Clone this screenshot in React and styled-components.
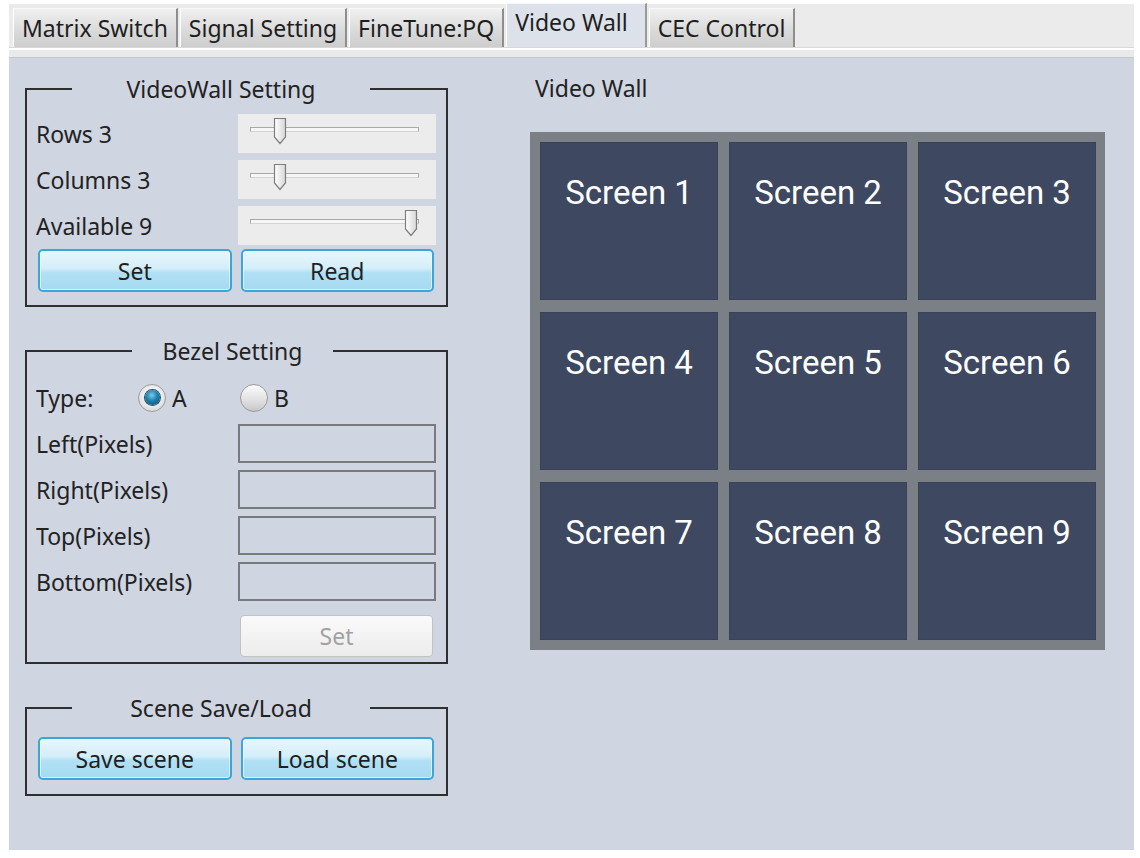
import styled, { createGlobalStyle } from 'styled-components'

const GlobalStyle = createGlobalStyle`
  html, body {
    margin: 0;
    background: #ffffff;
  }
  body {
    font-family: "Noto Sans", "Liberation Sans", sans-serif;
    color: #222;
  }
`

const tabs = ['Matrix Switch', 'Signal Setting', 'FineTune:PQ', 'Video Wall', 'CEC Control']

const sliders = [
  { label: 'Rows 3', value: 3, max: 15 },
  { label: 'Columns 3', value: 3, max: 15 },
  { label: 'Available 9', value: 9, max: 9 },
]

const bezels = ['Left(Pixels)', 'Right(Pixels)', 'Top(Pixels)', 'Bottom(Pixels)']

const screens = [1, 2, 3, 4, 5, 6, 7, 8, 9]

const Slider = ({ value, max }) => {
  const pos = (value - 1) / (max - 1)
  return (
    <SliderBox>
      <Track>
        <Thumb style={{ left: `calc(${pos * 100}% - ${pos * 14}px)` }}>
          <svg width="14" height="28" viewBox="0 0 14 28">
            <defs>
              <linearGradient id="thumbFill" x1="0" y1="0" x2="1" y2="0">
                <stop offset="0" stopColor="#ffffff" />
                <stop offset="1" stopColor="#d6d6d6" />
              </linearGradient>
            </defs>
            <path d="M1.5 1.5 H12.5 V20 L7 26.5 L1.5 20 Z" fill="url(#thumbFill)" stroke="#7d7d7d" strokeWidth="1.2" />
          </svg>
        </Thumb>
      </Track>
    </SliderBox>
  )
}

const Radio = ({ checked, label }) => (
  <RadioOption>
    <RadioCircle $checked={checked}>{checked && <RadioDot />}</RadioCircle>
    <span>{label}</span>
  </RadioOption>
)

const App = () => {
  return (
    <>
      <GlobalStyle />
      <Window>
        <TabBar>
          {tabs.map((t) => (
            <Tab key={t} $active={t === 'Video Wall'}>
              {t}
            </Tab>
          ))}
        </TabBar>
        <PaneEdge />
        <Panel>
          <LeftColumn>
            <Group $pb={13}>
              <Legend $left={36} $width={298}>VideoWall Setting</Legend>
              <Rows $top={11}>
                {sliders.map((s) => (
                  <Row key={s.label}>
                    <Label>{s.label}</Label>
                    <Slider value={s.value} max={s.max} />
                  </Row>
                ))}
              </Rows>
              <ButtonRow $top={4}>
                <BlueButton>Set</BlueButton>
                <BlueButton>Read</BlueButton>
              </ButtonRow>
            </Group>

            <Group $pb={15}>
              <Legend $left={96} $width={201}>Bezel Setting</Legend>
              <Rows $top={13}>
                <Row>
                  <TypeLine>
                    <Label>Type:</Label>
                    <Radio checked label="A" />
                    <Radio label="B" />
                  </TypeLine>
                </Row>
                {bezels.map((b) => (
                  <Row key={b}>
                    <Label>{b}</Label>
                    <Field />
                  </Row>
                ))}
                <Row>
                  <span />
                  <DisabledButton disabled>Set</DisabledButton>
                </Row>
              </Rows>
            </Group>

            <Group $pb={14}>
              <Legend $left={36} $width={298}>Scene Save/Load</Legend>
              <ButtonRow $top={15}>
                <BlueButton>Save scene</BlueButton>
                <BlueButton>Load scene</BlueButton>
              </ButtonRow>
            </Group>
          </LeftColumn>

          <RightColumn>
            <WallTitle>Video Wall</WallTitle>
            <Wall>
              {screens.map((n) => (
                <Screen key={n}>Screen {n}</Screen>
              ))}
            </Wall>
          </RightColumn>
        </Panel>
      </Window>
    </>
  )
}

export default App

const Window = styled.div`
  margin: 4px 0 0 9px;
  width: 1125px;
`

const TabBar = styled.div`
  display: flex;
  align-items: flex-end;
  height: 44px;
  padding-left: 4px;
  background: #ebebeb;
  border-bottom: 1px solid #d9d9d9;
  box-sizing: border-box;
`

const Tab = styled.div`
  box-sizing: border-box;
  height: ${(p) => (p.$active ? 44 : 39)}px;
  padding: 0 ${(p) => (p.$active ? 17 : 8)}px ${(p) => (p.$active ? 8 : 0)}px 8px;
  margin-right: 2px;
  display: flex;
  align-items: center;
  font-size: 23px;
  color: #1e1e1e;
  white-space: nowrap;
  background: ${(p) =>
    p.$active ? '#dde2ea' : 'linear-gradient(#f0f0f0, #d9d9d9 60%, #cdcdcd)'};
  border-top: 1px solid #f7f7f7;
  border-left: 1px solid #ffffff;
  border-right: 2px solid ${(p) => (p.$active ? '#9a9a9a' : '#8e8e8e')};
`

const PaneEdge = styled.div`
  height: 7px;
  background: #e8e9ea;
  border-top: 2px solid #ffffff;
  border-bottom: 1px solid #c3c8cc;
`

const Panel = styled.div`
  display: flex;
  height: 792px;
  padding: 16px 0 0 16px;
  box-sizing: border-box;
  background: #cfd5e1;
`

const LeftColumn = styled.div`
  display: flex;
  flex-direction: column;
  gap: 30px;
  width: 423px;
  padding-top: 1px;
`

const Group = styled.fieldset`
  margin: 0;
  padding: 0 10px ${(p) => p.$pb}px 9px;
  border: 2px solid #2f2f2f;
  min-width: 0;
`

const Legend = styled.legend`
  margin-left: ${(p) => p.$left}px;
  width: ${(p) => p.$width}px;
  padding: 0;
  text-align: left;
  display: flex;
  justify-content: center;
  font-size: 23px;
  line-height: 28px;
  color: #222;
`

const Rows = styled.div`
  display: flex;
  flex-direction: column;
  gap: 7px;
  margin-top: ${(p) => p.$top}px;
`

const Row = styled.div`
  display: grid;
  grid-template-columns: 202px 198px;
  align-items: center;
  height: 39px;
`

const Label = styled.span`
  font-size: 23px;
  color: #222;
  white-space: nowrap;
`

const SliderBox = styled.div`
  height: 39px;
  background: #ececec;
  padding: 13px 17px 0 12px;
  box-sizing: border-box;
`

const Track = styled.div`
  position: relative;
  height: 3px;
  background: #f6f6f6;
  border: 1px solid #a9a9a9;
  border-bottom-color: #d4d4d4;
`

const Thumb = styled.div`
  position: absolute;
  top: -11px;
  width: 14px;
  height: 28px;
  line-height: 0;
`

const ButtonRow = styled.div`
  display: grid;
  grid-template-columns: 1fr 1fr;
  gap: 9px;
  margin: ${(p) => p.$top}px 2px 0 2px;
`

const BlueButton = styled.button`
  height: 43px;
  border: 2px solid #3ba7d7;
  border-radius: 5px;
  background: linear-gradient(#e8f6fc, #d4eef9 45%, #b2e0f4 55%, #a5daf1);
  box-shadow: inset 0 0 0 1px rgba(255, 255, 255, 0.6);
  font-family: inherit;
  font-size: 23px;
  color: #1f1f1f;
  padding: 0;
`

const TypeLine = styled.div`
  grid-column: 1 / 3;
  display: grid;
  grid-template-columns: 102px 102px 1fr;
  align-items: center;
`

const RadioOption = styled.div`
  display: flex;
  align-items: center;
  gap: 6px;
  font-size: 23px;
`

const RadioCircle = styled.div`
  width: 28px;
  height: 28px;
  box-sizing: border-box;
  border-radius: 50%;
  border: 1px solid #9b9b9b;
  background: ${(p) =>
    p.$checked
      ? 'radial-gradient(circle at 50% 40%, #ffffff, #e6e6e6 60%, #c9c9c9)'
      : 'linear-gradient(#fbfbfb, #e2e2e2 55%, #c8c8c8)'};
  display: flex;
  align-items: center;
  justify-content: center;
`

const RadioDot = styled.div`
  width: 15px;
  height: 15px;
  border-radius: 50%;
  background: radial-gradient(circle at 45% 35%, #7ccbe8, #1f7fae 45%, #0b4a6e);
  box-shadow: 0 0 0 1px #1f4f6b;
`

const Field = styled.div`
  height: 39px;
  box-sizing: border-box;
  border: 2px solid #787a7e;
  background: #d0d6e1;
`

const DisabledButton = styled.button`
  height: 42px;
  margin: 7px 3px 0 2px;
  border: 1px solid #c2c2c2;
  border-radius: 4px;
  background: linear-gradient(#fafafa, #ececec);
  font-family: inherit;
  font-size: 23px;
  color: #a2a2a2;
  padding: 0;
`

const RightColumn = styled.div`
  margin-left: 82px;
  display: flex;
  flex-direction: column;
`

const WallTitle = styled.div`
  margin-left: 5px;
  font-size: 23px;
  line-height: 28px;
  color: #222;
`

const Wall = styled.div`
  margin-top: 30px;
  width: 575px;
  height: 518px;
  box-sizing: border-box;
  padding: 10px 9px 10px 10px;
  background: #7b7f86;
  display: grid;
  grid-template-columns: repeat(3, 1fr);
  grid-template-rows: repeat(3, 1fr);
  column-gap: 11px;
  row-gap: 12px;
`

const Screen = styled.div`
  background: #3e4961;
  box-shadow: inset 0 0 0 1px #394357;
  color: #ffffff;
  font-family: Roboto, "Liberation Sans", sans-serif;
  font-size: 33px;
  text-align: center;
  padding-top: 31px;
  box-sizing: border-box;
`
